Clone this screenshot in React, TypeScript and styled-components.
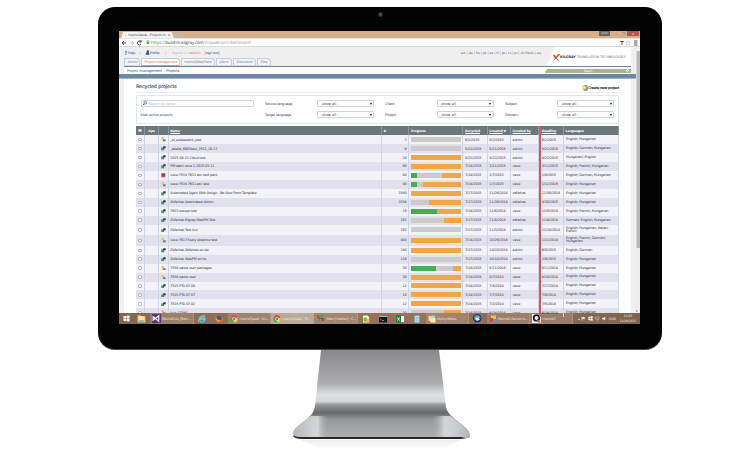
import React from 'react';
import styled, { createGlobalStyle } from 'styled-components';

const Global = createGlobalStyle`
  * { box-sizing: border-box; }
  body { margin: 0; background: #fff; }
`;

const Stage = styled.main`
  width: 750px; height: 450px; overflow: hidden; background: #fff;
  display: flex; flex-direction: column; align-items: center; padding: 7px 0 0 10px;
  font-family: "DejaVu Sans", Verdana, sans-serif; font-size: 3.4px; line-height: 4px; letter-spacing: -.14px;
  text-rendering: geometricPrecision; color: #30303a; white-space: nowrap;
`;
const Bezel = styled.section`
  width: 564px; height: 343px; background: #030303; border-radius: 17px;
  border-bottom: 1px solid #444; padding: 0 22px 0 21px; flex: none;
`;
const CameraBar = styled.div`
  height: 24px; display: flex; justify-content: center; padding-top: 5px;
`;
const Camera = styled.div`
  width: 5px; height: 5px; border-radius: 50%; background: #4a4d50; border: 1px solid #26282a; margin-left: 2px;
`;
const Screen = styled.div`
  width: 521px; height: 293px; overflow: hidden; background: #fff;
  display: flex; flex-direction: column;
`;
const TitleBar = styled.div`
  height: 7px; flex: none; background: #d8ae86; display: flex; justify-content: space-between;
`;
const ChromeTabs = styled.div`display: flex; align-items: flex-end; padding-left: 2px;`;
const ChromeTab = styled.div`
  width: 53px; height: 6px; background: #f5f3f2; display: flex; align-items: center; gap: 2px; padding: 0 4px;
  color: #444; clip-path: polygon(0 100%, 4% 0, 95% 0, 100% 100%); font-size: 3.3px;
  span:last-child { margin-left: auto; }
`;
const NewTab = styled.div`width: 9px; height: 4px; background: #c4b8ae; margin-bottom: 1px; transform: skewX(25deg);`;
const WindowButtons = styled.div`display: flex; align-items: flex-start; font-size: 3px; color: #333;`;
const UserChip = styled.div`width: 11px; height: 5px; background: #6f6760; color: #ddd; text-align: center; margin-right: 3px;`;
const WinButton = styled.div`width: 7px; height: 5px; display: grid; place-items: center;`;
const CloseButton = styled(WinButton)`width: 12px; background: #c84c50; color: #fff; margin-right: 1px;`;
const AddressBar = styled.div`
  height: 8px; flex: none; background: #fff; border-top: 1px solid #dfe5e9; display: flex; align-items: center;
  padding: 0 2px; gap: 3px;
`;
const Url = styled.div`
  flex: 1; font-family: "Open Sans", sans-serif; font-size: 4.4px; color: #999; letter-spacing: -.1px;
  b { font-weight: 400; color: #28a635; } i { font-style: normal; color: #333; }
`;
const Viewport = styled.div`flex: 1; min-height: 0; display: flex; border-top: 1.5px solid #d9d9d9;`;
const Page = styled.div`flex: 1; min-width: 0; background: #efeff0;`;
const Scroll = styled.div`width: 4px; background: #eee; padding-top: 4px; font-size: 3px; display: flex; flex-direction: column; justify-content: space-between;`;
const Thumb = styled.div`height: 197px; background: #b7b8ba; border-left: 1px solid #d4d4d4;`;
const PageTop = styled.div`height: 19px; display: flex; justify-content: space-between; padding-left: 5px;`;
const NavSide = styled.div`display: flex; flex-direction: column; justify-content: space-between;`;
const UserRow = styled.div`display: flex; align-items: center; height: 9px; padding-top: 2px; color: #244d86;`;
const Item = styled.span<{ $w: number; $c?: string }>`
  width: ${p => p.$w}px; color: ${p => p.$c || 'inherit'}; display: inline-flex; align-items: center; flex: none;
`;
const Tabs = styled.nav`display: flex; align-items: flex-end; gap: 1px;`;
const Tab = styled.div<{ $w: number; $on?: boolean }>`
  width: ${p => p.$w}px; height: 8.5px; padding: 1.7px 0 0 ${p => p.$on ? 3 : 2.5}px;
  background: ${p => p.$on ? '#fff' : '#f2f4f7'}; border: 0 solid #c3cddb; border-width: .6px 1px 0 .6px;
  border-top-right-radius: 4px; border-bottom: 1px solid ${p => p.$on ? '#ee9068' : '#d5dde5'};
  color: ${p => p.$on ? '#e56d3c' : '#6c7e96'};
`;
const Locale = styled.div`margin-left: auto; width: 86px; padding-top: 4px; font-size: 3.3px; letter-spacing: -.03px; color: #46658f; b { color: #f06a50; }`;
const Brand = styled.div`
  width: 84px; margin-right: 5px; background: #fff; clip-path: polygon(9% 0, 100% 0, 100% 100%, 0 100%);
  display: flex; align-items: center; padding: 1px 0 0 6px; gap: 0; color: #777; font-size: 3.4px; letter-spacing: -.1px;
  b { color: #333; }
`;
const Crumbs = styled.div`
  height: 8px; margin: 0 5px; background: #fff; border-top: 1px solid #66859d; display: flex; align-items: center;
  justify-content: space-between; padding-left: 3px; color: #3d4b60; font-size: 3.6px;
  b { font-weight: 400; color: #2b629b; }
`;
const Ready = styled.div`
  width: 86px; height: 4px; background: #a4b681; color: #fff; display: grid; grid-template-columns: 1fr auto 1fr; align-items: center;
  clip-path: polygon(3% 0, 100% 0, 100% 100%, 0 100%); border-bottom: .6px solid #829a60;
  font-size: 3px;
  &::before { content: ''; }
`;
const Dot = styled.i`width: 3px; height: 3px; border: .6px solid #fff; border-radius: 50%; background: #7ca7cc; justify-self: end; margin-right: 2px;`;
const BlueBar = styled.div`height: 4.5px; background: #6988a5; border-bottom: 1px solid #a8b8c5;`;
const Content = styled.div`margin: 0 5px; padding: 0 12px; background: #fff; height: 240px;`;
const Heading = styled.div`
  height: 14.5px; display: flex; justify-content: space-between; align-items: center; border-bottom: 1px solid #e7edf1;
  padding-top: 5px; margin-right: -2px;
`;
const Title = styled.h1`margin: 0; font-size: 4.8px; line-height: 6px; font-weight: 400; letter-spacing: -.09px; color: #3f4653; -webkit-text-stroke: .15px #3f4653;`;
const Create = styled.div`display: flex; align-items: center; gap: 0; color: #222; -webkit-text-stroke: .15px #222; font-size: 3.5px; margin-right: 2px;`;
const Filters = styled.div`
  width: 483px; height: 29px; margin-top: 1.5px; border: 1px solid #dce7ef; background: #fff; border-radius: 1px;
  display: grid; grid-template-columns: 128px 52px 68px 51.5px 68.5px 52px 57px;
  grid-template-rows: 11px 11px; align-items: center; padding-top: 2.5px; font-size: 3.5px; color: #44474e;
`;
const Search = styled.div`
  width: 113px; height: 6.5px; margin-left: 3.5px; border: 1px solid #ccd4dc; border-radius: 1px; display: flex; align-items: center; gap: 2px; color: #bbb;
`;
const ViewLink = styled.div`padding-left: 3px; color: #315e91;`;
const Select = styled.div`
  width: 57px; height: 7px; border: 1px solid #d1d3d5; border-radius: 1px; padding: 0 1.5px; display: flex; align-items: center;
  justify-content: space-between; color: #444; letter-spacing: 0;
  &::after { content: ''; border: 1px solid transparent; border-top: 2px solid #111; border-bottom: 0; }
`;
const Table = styled.div`width: 483px; margin-top: 2.5px;`;
const columns = '8.7px 14.8px 9.2px 213.3px 27.5px 54px 24.3px 23.2px 28.5px 24.5px 1fr';
const HeadRow = styled.div`
  display: grid; grid-template-columns: ${columns}; height: 9.2px; background: #6c7779; color: #fff; font-size: 3.2px; font-weight: 700;
`;
const Row = styled.div<{ $odd: boolean; $tall?: boolean }>`
  display: grid; grid-template-columns: ${columns}; height: ${p => p.$tall ? 10.6 : 8.95}px;
  background: ${p => p.$odd ? '#e0e1ed' : '#f2f2f8'};
`;
const Cell = styled.div<{ $right?: boolean; $late?: boolean; $center?: boolean }>`
  border-right: .8px solid #cdd5e5; display: flex; align-items: center; min-width: 0;
  justify-content: ${p => p.$right ? 'flex-end' : p.$center ? 'center' : 'flex-start'};
  padding: 0 ${p => p.$center || !p.$right ? 0 : 2}px 0 ${p => p.$center ? 0 : 1.6}px;
  ${p => p.$late ? 'position: relative; &::before { content: ""; position: absolute; left: 0; top: 0; bottom: 0; width: 1.3px; background: #cf5962; } padding-left: 2.2px;' : ''}
`;
const HeadCell = styled(Cell)`border-right-color: #8b979c;`;
const Languages = styled(Cell)`line-height: 3.1px; white-space: normal; padding-right: 7px; padding-left: 2px; letter-spacing: -.12px;`;
const Check = styled.i`width: 3.4px; height: 3.4px; border: .7px solid #bbb; border-radius: 1px; background: #fff;`;
const Bar = styled.div`width: 50px; height: 5px; background: #cbcbca; display: flex; justify-content: space-between;`;
const Done = styled.i<{ $v: number }>`width: ${p => p.$v}%; background: #42af50;`;
const Pending = styled.i<{ $v: number }>`width: ${p => p.$v}%; background: #f4a73f;`;
const Taskbar = styled.footer`
  height: 11px; flex: none; background: linear-gradient(90deg, #83684f, #93755b 35%, #957056 60%, #80634f); display: flex; color: #f0e5dd; font-size: 3.4px;
`;
const Task = styled.div<{ $w: number; $open?: boolean; $active?: boolean }>`
  width: ${p => p.$w}px; height: 11px; display: flex; align-items: center; gap: 1.5px; flex: none; padding: 0 ${p => p.$open ? 2 : 0}px;
  justify-content: ${p => p.$open ? 'flex-start' : 'center'};
  overflow: hidden; background: ${p => p.$active ? '#ffffff60' : p.$open ? '#ffffff24' : 'transparent'};
  border-right: ${p => p.$open ? '.7px solid #c1a48b77' : 0};
  svg { flex: none; }
`;
const Tray = styled.div`margin-left: auto; display: flex; align-items: center; gap: 1.8px; padding-right: 4px; svg { width: 5px; height: 5px; }`;
const Clock = styled.div`text-align: center; line-height: 4.6px; font-size: 3.1px; margin-left: 2px;`;
const StandArt = styled.svg`width: 190px; height: 100px; flex: none; margin-left: 1px; display: block;`;

type IconKind = 'start' | 'folder' | 'vs' | 'ie' | 'firefox' | 'chrome' | 'main' | 'paint' | 'cmd' | 'excel' | 'note' | 'sticky' | 'bird' | 'server' | 'q' | 'flag' | 'net' | 'sound' | 'search' | 'green' | 'user' | 'red' | 'create' | 'logo' | 'help' | 'profile';
const art: Record<IconKind, React.ReactNode> = {
  start: <path fill="#fff" d="M1 3l6-1v5.5H1zm7-1.2L15 1v6.5H8zM1 8.5h6V14l-6-1zm7 0h7V15l-7-1z" />,
  folder: <><path fill="#e8c465" d="M1 2h6l1 2h7v11H1z" /><path fill="#f8e6a0" d="M3 4h10v9H3z" /><path fill="#72b7d7" d="M4 11h8v4H4z" /></>,
  vs: <><rect width="16" height="16" fill="#5c347b" /><path fill="none" stroke="#fff" strokeWidth="2" d="M2 5l10 8V3L2 11z" /></>,
  ie: <><circle cx="8" cy="8" r="5.5" fill="none" stroke="#42bce8" strokeWidth="3.5" /><path d="M4 8h10" stroke="#bce9fa" strokeWidth="2" /><path d="M1 14C-1 10 10-1 15 2" fill="none" stroke="#f1cc48" strokeWidth="1.5" /></>,
  firefox: <><circle cx="8" cy="8" r="7.5" fill="#e96d19" /><circle cx="8" cy="6" r="5" fill="#315a98" /><path fill="#f5a623" d="M1 4c3 1 2 6 9 6-1 4-8 4-9-6" /></>,
  chrome: <><circle cx="8" cy="8" r="7.5" fill="#f1c932" /><path fill="#dd4c3f" d="M8 8L1 5a7.5 7.5 0 0 1 14 0z" /><path fill="#3fa553" d="M1 5l7 4v6.5A7.5 7.5 0 0 1 1 5" /><circle cx="8" cy="8" r="3.5" fill="#fff" /><circle cx="8" cy="8" r="2.5" fill="#4a8ac9" /></>,
  main: <><path fill="#b2483d" d="M2 2h4v5H2zm8 5h4v6h-4z" /><path fill="#59a052" d="M8 1h5v5H8zM3 9h4v6H3z" /><path stroke="#5b5148" strokeWidth="1.2" d="M4 8h8" /></>,
  paint: <><path fill="#f3f5de" d="M2 1h9l3 3v11H2z" /><path fill="#80bb35" d="M3 5h7v8H3z" /><path fill="#efbd32" d="M9 8h6v6H9z" /></>,
  cmd: <><rect y="2" width="16" height="13" fill="#15191c" /><path fill="#aebac2" d="M0 2h16v2H0z" /><path d="M2 7l2 2-2 2m4 0h4" stroke="#eee" fill="none" /></>,
  excel: <><path fill="#fff" d="M8 2h8v12H8z" /><path fill="#217a48" d="M0 1l10-1v16L0 14z" /><path stroke="#fff" strokeWidth="2" d="M3 5l4 6m0-6l-4 6" /></>,
  note: <><path fill="#b8dfef" stroke="#68a3c1" d="M3 1h10v14H3z" /><path stroke="#739bab" d="M5 5h6M5 8h6M5 11h6" /></>,
  sticky: <><path fill="#f3df72" d="M1 2h10v10H1z" /><path fill="#a4d5d9" d="M5 1h9v8H5z" /><path fill="#f7f0a2" d="M5 6h10v9H5z" /></>,
  bird: <><circle cx="8" cy="8" r="8" fill="#173965" /><path fill="#59a5d8" d="M2 6c5-7 10-4 13 2l-6-1-6 5z" /><path fill="#eef4f7" d="M4 8l6-2 3 5-6 2z" /></>,
  server: <><path fill="#e7c552" d="M4 1h10v7H4z" /><path fill="#c84d38" d="M1 6h7v8H1z" /><path fill="#5c91cc" d="M8 8h7v6H8z" /></>,
  q: <><rect width="16" height="16" fill="#eef2f3" /><circle cx="8" cy="7" r="5" fill="none" stroke="#15191e" strokeWidth="3" /><path d="M9 10l5 5" stroke="#df5431" strokeWidth="3" /></>,
  flag: <path fill="#fff" d="M2 2h2v12H2zm3 1l8 1-2 3 2 3-8-1z" />,
  net: <path fill="none" stroke="#ddd" strokeWidth="1.5" d="M2 3h11v7H2zm3 10h6" />,
  sound: <><path fill="#fff" d="M1 6h3l5-4v12L4 10H1z" /><path fill="none" stroke="#fff" d="M11 5q3 3 0 6" /></>,
  search: <><circle cx="10" cy="6" r="4.5" fill="#d6e9f7" stroke="#315f9b" strokeWidth="2" /><path stroke="#315f9b" strokeWidth="3" d="M7 9l-5 5" /></>,
  green: <><path fill="#34884b" d="M1 5h10v10H1z" /><path fill="#203a31" d="M8 1h8v7H8z" /><path stroke="#a6cbae" d="M3 8h4M3 12h6" /></>,
  user: <><circle cx="6" cy="4" r="4" fill="#e9ba46" /><path fill="#eed795" d="M1 8h9v7H1z" /><path fill="#547dab" d="M7 8h9v7H7z" /></>,
  red: <><path fill="#c94c61" d="M1 1h14v14H1z" /><path stroke="#78283f" strokeWidth="2" d="M2 4h12M5 8h7" /></>,
  create: <><path fill="#407cb4" d="M4 1h11v14H4z" /><path fill="#edcf43" d="M1 3h11v9H1z" /><path fill="#fff6a8" d="M3 5h6v4H3z" /></>,
  logo: <><path stroke="#e55831" strokeWidth="4" d="M1 2l5 7L15 0" fill="none" /><path stroke="#515763" strokeWidth="2" d="M1 15l6-6 6 7" fill="none" /></>,
  help: <path fill="#305d9b" d="M5 10h4V8l3-3-2-4H5L3 4l3 1 3-1-4 4zm0 2h4v3H5z" />,
  profile: <path fill="#274f90" d="M5 5a4 4 0 0 1 8 0c0 2-1 3-2 4l3 2v4H2v-4l4-2z" />,
};
const Icon = ({ kind, size = 7 }: { kind: IconKind; size?: number }) => <svg width={size} height={size} viewBox="0 0 16 16">{art[kind]}</svg>;

type Job = [IconKind, string, string, number, number, string, string, string, string, string];
const EH = 'English; Hungarian';
const jobs: Job[] = [
  ['user', '_al_webwsarck_test', '3', 0, 0, '6/2/2015', '6/2/2015', 'admin', '6/2/2015', EH],
  ['green', '_abella_6003test_2521_10-27', '6', 0, 0, '5/21/2015', '5/21/2015', 'admin', '5/21/2015', 'English; German, Hungarian'],
  ['green', '2015-04-22-Cloud test', '24', 0, 100, '4/22/2015', '4/22/2015', 'admin', '4/22/2015', 'Hungarian; English'],
  ['green', 'PM dash veve 1 2015-03-11', '60', 0, 100, '7/14/2015', '3/11/2015', 'veve', '3/11/2015', 'English; French, Hungarian'],
  ['red', 'veve 7534 7631 acc test pack', '40', 12, 38, '7/14/2015', '1/7/2015', 'veve', '1/8/2015', 'English; German, Hungarian'],
  ['user', 'veve 7534 7631 acc test', '40', 12, 76, '7/14/2015', '1/7/2015', 'veve', '1/12/2015', EH],
  ['green', 'Automated Again With Assign - No User From Template', '1540', 0, 100, '7/17/2015', '11/26/2014', 'zoferkas', '11/30/2014', EH],
  ['green', 'Zoferkas Automated Action', '1534', 0, 65, '7/17/2015', '11/26/2014', 'zoferkas', '4/30/2015', EH],
  ['green', '7613 except test', '19', 51, 49, '7/14/2015', '11/6/2014', 'veve', '11/5/2014', 'English; French, Hungarian'],
  ['green', 'Zoferkas Kilgray WebPM Test', '192', 0, 34, '7/17/2015', '11/4/2014', 'zoferkas', '11/4/2014', 'German; English, Hungarian'],
  ['green', 'Zoferkas Test Aut', '192', 0, 0, '7/17/2015', '11/3/2014', 'admin', '11/28/2014', 'English; Hungarian, Italian, French'],
  ['user', 'veve 7613 fuzzy distance test', '404', 0, 100, '7/14/2015', '10/29/2014', 'veve', '11/1/2014', 'English; French, German, Hungarian'],
  ['green', 'Zoferkas Zoferkas en-de', '240', 0, 100, '7/17/2015', '10/20/2014', 'admin', '6/9/2015', 'English; German'],
  ['green', 'Zoferkas WebPM en-hu', '128', 0, 0, '7/17/2015', '10/10/2014', 'admin', '2/9/2015', EH],
  ['user', '7534 same user packages', '30', 50, 17, '7/14/2015', '8/11/2014', 'veve', '8/11/2014', EH],
  ['user', '7534 same user', '30', 0, 100, '7/14/2015', '8/7/2014', 'veve', '8/10/2014', EH],
  ['green', '7515 PTA 07-08', '12', 0, 100, '7/14/2015', '7/8/2014', 'veve', '7/17/2014', EH],
  ['green', '7515 PTA 07-07', '10', 0, 100, '7/14/2015', '7/7/2014', 'veve', '7/9/2014', EH],
  ['green', '7515 PTA 07-02', '12', 0, 100, '7/14/2015', '7/2/2014', 'veve', '7/5/2014', EH],
  ['user', 'bug 17380', '30', 0, 34, '7/14/2015', '6/24/2014', 'veve', '6/28/2014', EH],
];

const tasks: { kind: IconKind; w: number; label?: string; active?: boolean; size?: number }[] = [
  { kind: 'folder', w: 16.5, size: 9 }, { kind: 'vs', w: 44, label: 'MemoQ.ks_Main...', size: 9 }, { kind: 'ie', w: 16.5, size: 8 }, { kind: 'firefox', w: 18, size: 8 },
  { kind: 'chrome', w: 43, label: 'memoQweb · A.t...', size: 8 }, { kind: 'chrome', w: 43, label: 'memoQweb · Pr...', active: true, size: 8 },
  { kind: 'main', w: 43.5, label: 'Main [master] · C...', size: 9 }, { kind: 'paint', w: 16.5, size: 8 }, { kind: 'cmd', w: 17.5, size: 8 }, { kind: 'excel', w: 17, size: 8 },
  { kind: 'note', w: 17, size: 8 }, { kind: 'sticky', w: 43, label: 'Sticky Notes', size: 8 }, { kind: 'bird', w: 18, size: 8.5 },
  { kind: 'server', w: 43.5, label: 'MemoQ Server A...', size: 8 }, { kind: 'q', w: 43, label: 'memoQ', size: 9 },
];

function Browser() {
  return <>
    <TitleBar>
      <ChromeTabs>
        <ChromeTab><Icon kind="logo" size={3} /><span>memoQweb - Projects in</span><span>×</span></ChromeTab><NewTab />
      </ChromeTabs>
      <WindowButtons><UserChip>Judit</UserChip><WinButton>–</WinButton><WinButton>❐</WinButton><CloseButton>×</CloseButton></WindowButtons>
    </TitleBar>
    <AddressBar>
      <svg width="22" height="6" viewBox="0 0 22 6" fill="none" stroke="#444"><path d="M5 3H1l2-2M1 3l2 2" /><path stroke="#bbb" d="M9 3h4l-2-2m2 2l-2 2" /><path d="M20 2a2 2 0 1 0 0 2M20 0v2h-2" /></svg>
      <Url><svg width="4" height="4" viewBox="0 0 4 5"><path d="M.5 2h3v3h-3z" fill="#51a950" /><path d="M1 2V.5h2V2" fill="none" stroke="#51a950" strokeWidth=".6" /></svg> <b>https:</b>//<i>build-m.kilgray.com</i>/mqweb/pm/dashboard</Url>
      <svg width="18" height="6" viewBox="0 0 18 6" fill="none" stroke="#555"><path d="M0 1.5h4M2 1.5V5" /><path stroke="#aaa" strokeWidth=".5" d="M8 .5l.7 1.6h1.8L9 3.4l.6 2L8 4.2l-1.6 1.2.6-2-1.5-1.3h1.8z" /><path d="M14 1h3.5M14 3h3.5M14 5h3.5" /></svg>
    </AddressBar>
  </>;
}

function PageHeader() {
  return <>
    <PageTop>
      <NavSide>
        <UserRow>
          <Item $w={15}><Icon kind="help" size={4} />Help</Item><Item $w={6} $c="#aaa">|</Item>
          <Item $w={20}><Icon kind="profile" size={5} />Profile</Item><Item $w={7} $c="#aaa">|</Item>
          <Item $w={18.5} $c="#b4b8c0">Signed in as</Item><Item $w={14} $c="#f06c4e">admin</Item><Item $w={20}>[sign out]</Item>
        </UserRow>
        <Tabs><Tab $w={15.5}>Admin</Tab><Tab $w={39} $on>Project management</Tab><Tab $w={34}>memoQWebTrans</Tab><Tab $w={16.5}>qTerm</Tab><Tab $w={23}>Discussion</Tab><Tab $w={14}>Files</Tab></Tabs>
      </NavSide>
      <Locale><b>en</b> | de | hu | pt | es | fr | ja | ru | pl | zh-Hans | eq</Locale>
      <Brand><Icon kind="logo" size={7} /><span><b>KILGRAY</b> TRANSLATION TECHNOLOGIES</span></Brand>
    </PageTop>
    <Crumbs><span><b>Project management</b> &nbsp;› Projects</span><Ready>Ready<Dot /></Ready></Crumbs>
    <BlueBar />
  </>;
}

function Filter({ label }: { label: string }) {
  return <><span>{label}</span><Select>- show all -</Select></>;
}

function Dashboard() {
  return <Content>
    <Heading><Title>Recycled projects</Title><Create><Icon kind="create" size={6} />Create new project</Create></Heading>
    <Filters>
      <Search><Icon kind="search" size={5} />Search by name</Search><Filter label="Source language" /><Filter label="Client" /><Filter label="Subject" />
      <ViewLink>View active projects</ViewLink><Filter label="Target language" /><Filter label="Project" /><Filter label="Domain" />
    </Filters>
    <Table>
      <HeadRow><HeadCell $center><Check /></HeadCell><HeadCell $center>Ops</HeadCell><HeadCell /><HeadCell><u>Name</u></HeadCell><HeadCell>#</HeadCell><HeadCell>Progress</HeadCell><HeadCell><u>Recycled</u></HeadCell><HeadCell><u>Created</u>&nbsp;▼</HeadCell><HeadCell><u>Created by</u></HeadCell><HeadCell $late><u>Deadline</u></HeadCell><HeadCell>Languages</HeadCell></HeadRow>
      {jobs.map(([kind, name, count, done, pending, recycled, created, author, due, langs], i) => <Row key={i} $odd={i % 2 === 1} $tall={i === 10 || i === 11}>
        <Cell $center><Check /></Cell><Cell /><Cell $center><Icon kind={kind} size={4.6} /></Cell><Cell>{name}</Cell><Cell $right>{count}</Cell>
        <Cell><Bar><Done $v={done} /><Pending $v={pending} /></Bar></Cell><Cell>{recycled}</Cell><Cell>{created}</Cell><Cell>{author}</Cell><Cell $late>{due}</Cell><Languages>{langs}</Languages>
      </Row>)}
    </Table>
  </Content>;
}

export default function App() {
  return <><Global /><Stage>
    <Bezel><CameraBar><Camera /></CameraBar><Screen>
      <Browser />
      <Viewport><Page><PageHeader /><Dashboard /></Page><Scroll><Thumb /><span>▾</span></Scroll></Viewport>
      <Taskbar><Task $w={14}><Icon kind="start" /></Task>
        {tasks.map((t, i) => <Task key={i} $w={t.w} $open={!!t.label} $active={t.active}><Icon kind={t.kind} size={t.size} />{t.label}</Task>)}
        <Tray><span>▴</span><Icon kind="flag" /><Icon kind="start" /><Icon kind="net" /><Icon kind="sound" /><span>HUN</span><Clock>14:03<br />11/16/2015</Clock></Tray>
      </Taskbar>
    </Screen></Bezel>
    <StandArt viewBox="0 0 190 100">
      <defs>
        <linearGradient id="metal" x1="0" y1="0" x2="0" y2="1">
          <stop offset="0" stopColor="#89898c" /><stop offset=".38" stopColor="#acadb0" /><stop offset=".5" stopColor="#dddee0" /><stop offset=".58" stopColor="#d7d8da" /><stop offset=".62" stopColor="#96979a" /><stop offset=".71" stopColor="#67686b" /><stop offset=".79" stopColor="#98999c" /><stop offset="1" stopColor="#aeb0b4" />
        </linearGradient>
        <linearGradient id="edge" x1="0" y1="0" x2="1" y2="0"><stop offset="0" stopColor="#b2b9c0" /><stop offset=".08" stopColor="#c5c9cd" /><stop offset=".14" stopColor="#e0e3e5" stopOpacity=".8" /><stop offset=".2" stopColor="#aaa" stopOpacity="0" /><stop offset=".79" stopColor="#aaa" stopOpacity="0" /><stop offset=".86" stopColor="#e0e3e5" stopOpacity=".8" /><stop offset=".94" stopColor="#c5c9cd" /><stop offset="1" stopColor="#afb5bb" /></linearGradient>
        <linearGradient id="shade" x1="0" y1="0" x2="0" y2="1"><stop offset="0" stopColor="#eee" /><stop offset="1" stopColor="#fff" /></linearGradient>
      </defs>
      <path d="M15 90h160l-20 10H36z" fill="url(#shade)" />
      <path d="M7 86q2 3 9 3h158q7 0 9-3l-2-1H9z" fill="#25282a" />
      <path d="M35 0h118l7 57q1 6 9 12l11 9q4 4 4 8t-9 1H16q-10 0-9-4 1-3 5-7l10-8q6-5 7-12z" fill="url(#metal)" />
      <path d="M25 66l-3 2-10 8q-5 4-5 7 0 4 9 4h159q9 0 8-3 0-3-5-7l-11-9-3-2z" fill="url(#edge)" />
    </StandArt>
  </Stage></>;
}
